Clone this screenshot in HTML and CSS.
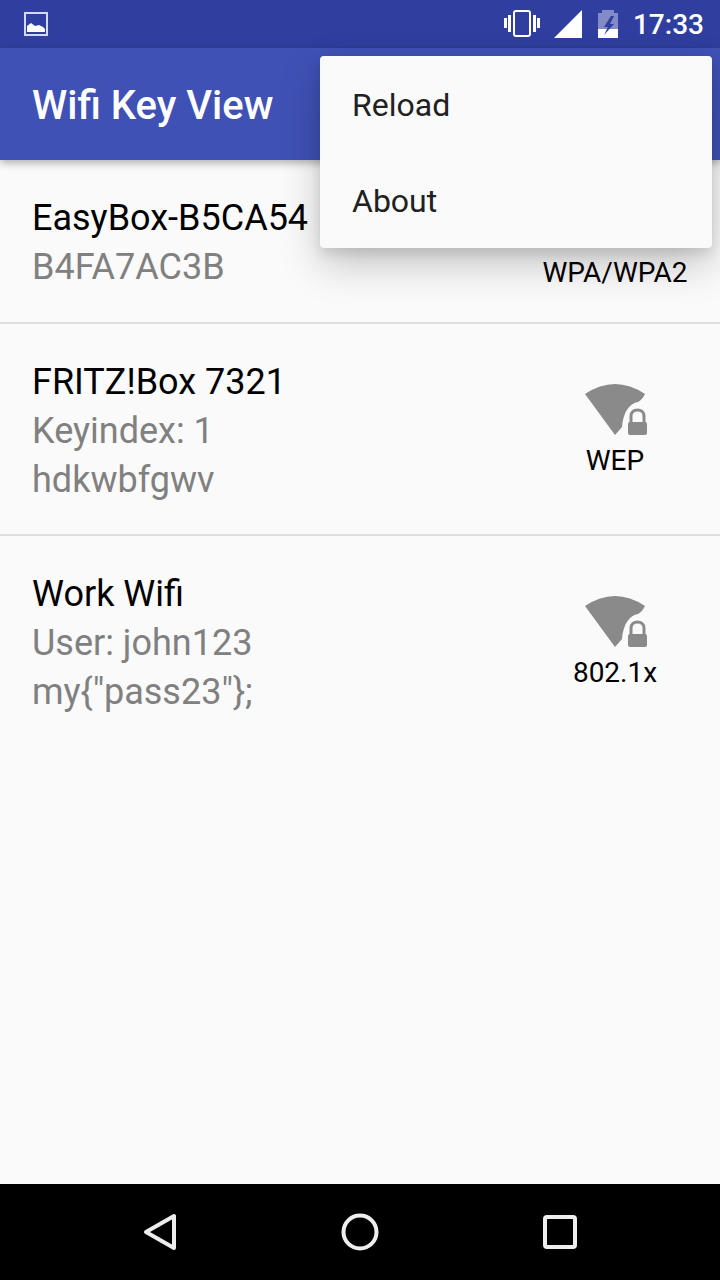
FILE: index.html
```html
<!DOCTYPE html>
<html lang="en">
<head>
  <meta charset="UTF-8" />
  <title>Wifi Key View</title>
  <link rel="stylesheet" href="styles.css">
</head>
<body>
  <div class="phone">
    <div class="status-bar">
      <svg class="status-image" width="24" height="24" viewBox="0 0 24 24">
        <rect x="1" y="1" width="22" height="22" fill="none" stroke="#d5d9f0" stroke-width="2" />
        <path d="M3 20 V14 L7 11 L11 14 L15 13 L19 15 L21 17 V20 Z" fill="#fff" />
      </svg>
      <svg class="vibrate" width="36" height="28" viewBox="0 0 36 28" fill="#fff">
        <rect x="0" y="8" width="3" height="10" />
        <rect x="4" y="5" width="3" height="17" />
        <rect x="10" y="1" width="16" height="25" rx="2" fill="none" stroke="#fff" stroke-width="2" />
        <rect x="29" y="5" width="3" height="17" />
        <rect x="33" y="8" width="3" height="10" />
      </svg>
      <svg class="signal" width="28" height="28" viewBox="0 0 28 28">
        <path d="M0 28 L28 0 V28 Z" fill="#fff" />
      </svg>
      <svg class="battery" width="20" height="28" viewBox="0 0 20 28">
        <path d="M4 3 V0 H16 V3 H20 V19 H0 V3 Z" fill="#fff" fill-opacity="0.4" />
        <rect y="19" width="20" height="9" fill="#fff" />
        <path d="M13 6 L6 17 H10 L6 25 L16 14 H12 L16 6 Z" fill="#303f9f" />
      </svg>
      <span class="clock">17:33</span>
    </div>

    <header class="app-bar">
      <h1>Wifi Key View</h1>
    </header>

    <main class="wifi-list">
      <div class="wifi-row">
        <div class="wifi-text">
          <div class="wifi-name">EasyBox-B5CA54</div>
          <div class="wifi-detail">B4FA7AC3B</div>
        </div>
        <div class="wifi-type">
          <svg class="wifi-icon" width="70" height="60" viewBox="0 0 70 60"><use href="#wifi-lock" /></svg>
          <span>WPA/WPA2</span>
        </div>
      </div>
      <div class="wifi-row">
        <div class="wifi-text">
          <div class="wifi-name">FRITZ!Box 7321</div>
          <div class="wifi-detail">Keyindex: 1</div>
          <div class="wifi-detail">hdkwbfgwv</div>
        </div>
        <div class="wifi-type">
          <svg class="wifi-icon" width="70" height="60" viewBox="0 0 70 60"><use href="#wifi-lock" /></svg>
          <span>WEP</span>
        </div>
      </div>
      <div class="wifi-row">
        <div class="wifi-text">
          <div class="wifi-name">Work Wifi</div>
          <div class="wifi-detail">User: john123</div>
          <div class="wifi-detail">my{"pass23"};</div>
        </div>
        <div class="wifi-type">
          <svg class="wifi-icon" width="70" height="60" viewBox="0 0 70 60"><use href="#wifi-lock" /></svg>
          <span>802.1x</span>
        </div>
      </div>
    </main>

    <div class="popup-menu">
      <div class="menu-item">Reload</div>
      <div class="menu-item">About</div>
    </div>

    <nav class="nav-bar">
      <svg width="36" height="40" viewBox="0 0 36 40">
        <path d="M4 20 L32 4 V36 Z" fill="none" stroke="#eee" stroke-width="4" stroke-linejoin="round" />
      </svg>
      <svg width="40" height="40" viewBox="0 0 40 40">
        <circle cx="20" cy="20" r="16.5" fill="none" stroke="#eee" stroke-width="4" />
      </svg>
      <svg width="36" height="36" viewBox="0 0 36 36">
        <rect x="3" y="3" width="30" height="30" rx="2" fill="none" stroke="#eee" stroke-width="4" />
      </svg>
    </nav>
  </div>

  <svg width="0" height="0" class="icon-defs">
    <defs>
      <g id="wifi-lock" fill="#8a8a8a">
        <path d="M5 14 Q35 -6 65 14 Q62 20 58 22 C50 23 43 32 42 47 L35 55 Z" />
        <rect x="48" y="42" width="19" height="13" rx="2" />
        <path d="M51 43 V36 C51 28 64 28 64 36 V43" fill="none" stroke="#8a8a8a" stroke-width="3" />
      </g>
    </defs>
  </svg>
</body>
</html>
```

FILE: styles.css
```css
html, body {
  margin: 0;
  padding: 0;
}

body {
  font-family: Roboto, sans-serif;
  background-color: #fafafa;
}

.phone {
  position: relative;
  display: flex;
  flex-direction: column;
  width: 720px;
  height: 1280px;
  overflow: hidden;
}

.icon-defs {
  position: absolute;
}

.status-bar {
  display: flex;
  align-items: center;
  flex: 0 0 48px;
  padding: 0 16px 0 24px;
  background-color: #303f9f;
  color: #fff;
}

.status-image {
  margin-right: auto;
}

.signal {
  margin-left: 14px;
}

.battery {
  margin-left: 16px;
}

.clock {
  margin-left: 15px;
  font-size: 28px;
  font-weight: 500;
}

.app-bar {
  position: relative;
  z-index: 1;
  display: flex;
  align-items: center;
  flex: 0 0 112px;
  padding: 2px 32px 0;
  box-sizing: border-box;
  background-color: #3f51b5;
  box-shadow: 0 3px 8px rgba(0,0,0,0.3);
}

.app-bar h1 {
  margin: 0;
  color: #fff;
  font-size: 40px;
  font-weight: 500;
}

.wifi-list {
  flex: 1;
}

.wifi-row {
  display: flex;
  align-items: center;
  justify-content: space-between;
  min-height: 99px;
  padding: 34px 33px 29px 32px;
  border-bottom: 2px solid #dedede;
}

.wifi-row:last-child {
  border-bottom: none;
}

.wifi-text {
  align-self: flex-start;
}

.wifi-name {
  color: #000;
  font-size: 36px;
  line-height: 49px;
}

.wifi-detail {
  color: #808080;
  font-size: 36px;
  line-height: 49px;
}

.wifi-type {
  display: flex;
  flex-direction: column;
  align-items: center;
  width: 144px;
  margin-top: -2px;
  color: #000;
  font-size: 28px;
  line-height: 38px;
}

.wifi-icon {
  display: block;
  margin: -2px 0 2px;
}

.popup-menu {
  position: absolute;
  z-index: 2;
  top: 56px;
  left: 320px;
  width: 392px;
  height: 192px;
  border-radius: 4px;
  background-color: #fafafa;
  box-shadow: 0 16px 40px rgba(0,0,0,0.22), 0 6px 12px rgba(0,0,0,0.1);
}

.menu-item {
  display: flex;
  align-items: center;
  box-sizing: border-box;
  height: 96px;
  padding: 2px 32px 0;
  color: #212121;
  font-size: 32px;
}

.nav-bar {
  display: grid;
  grid-template-columns: repeat(3, 1fr);
  align-items: center;
  justify-items: center;
  flex: 0 0 96px;
  padding: 0 60px;
  background-color: #000;
}
```
